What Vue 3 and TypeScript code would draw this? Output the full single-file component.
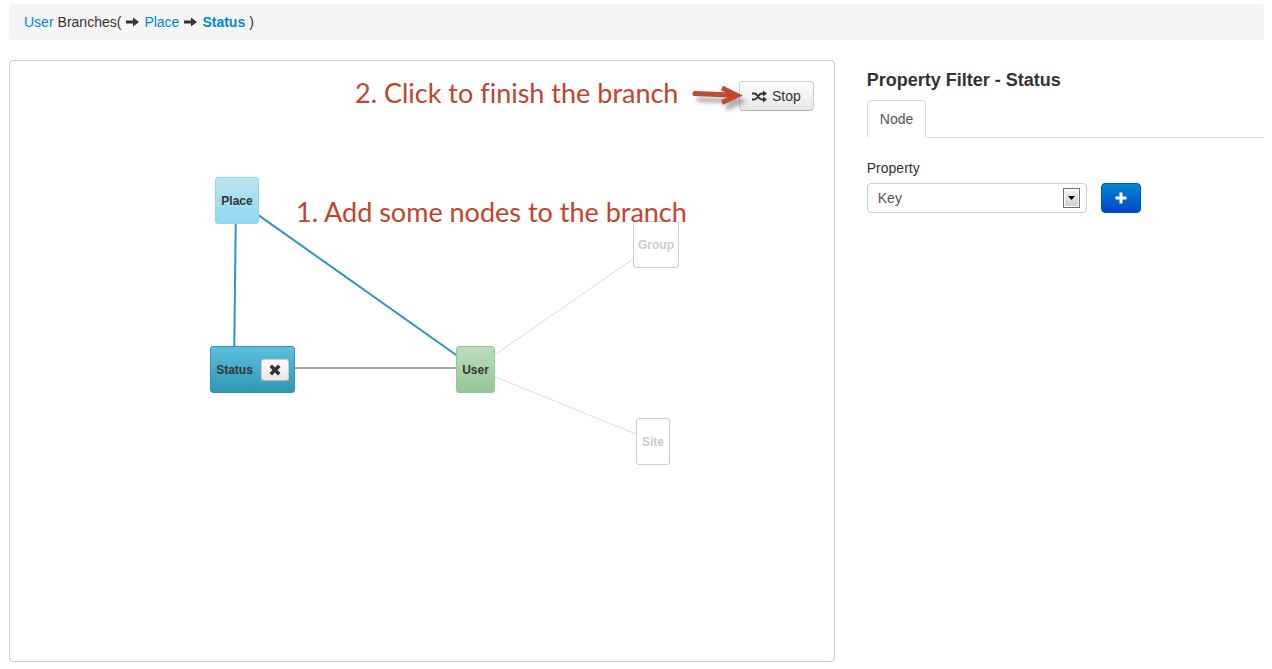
<script setup lang="ts">
import { ref } from 'vue'

interface GraphNode {
  name: string
  kind: 'visited' | 'current' | 'root' | 'idle'
  x: number
  y: number
  width: number
}

const nodes: GraphNode[] = [
  { name: 'Place', kind: 'visited', x: 205, y: 116, width: 44 },
  { name: 'Status', kind: 'current', x: 200, y: 285, width: 85 },
  { name: 'User', kind: 'root', x: 446, y: 285, width: 39 },
  { name: 'Group', kind: 'idle', x: 623, y: 160, width: 46 },
  { name: 'Site', kind: 'idle', x: 626, y: 357, width: 34 },
]

const property = ref('Key')
</script>

<template>
  <div class="page">
    <nav class="breadcrumb" aria-label="Branch">
      <a href="#user">User</a>
      <span>Branches(</span>
      <svg class="arrow" viewBox="0 0 13 10" aria-hidden="true"><path d="M0 3.500h7V.5L13 5 7 9.500v-3H0z" /></svg>
      <a href="#place">Place</a>
      <svg class="arrow" viewBox="0 0 13 10" aria-hidden="true"><path d="M0 3.500h7V.5L13 5 7 9.500v-3H0z" /></svg>
      <a href="#status" class="active">Status</a>
      <span>)</span>
    </nav>

    <div class="row">
      <main class="canvas">
        <svg class="edges" aria-hidden="true">
          <g class="edge-idle">
            <path d="M466 307 646 182" />
            <path d="M466 308 643 380" />
          </g>
          <path class="edge-open" d="M242 307H466" />
          <path class="edge-branch" d="M226 140 224 308M227 139 466 308" />
        </svg>

        <button type="button" class="btn stop">
          <svg width="15" height="13" viewBox="0 0 15 13" aria-hidden="true">
            <path class="stroke" d="M0 3.500h2.200c1.500 0 2.300.8 3.200 2l1.400 2c.9 1.300 1.800 2 3.200 2h2M0 9.500h2.200c1.500 0 2.300-.8 3.200-2l1.400-2c.9-1.300 1.800-2 3.200-2h2" />
            <path d="M11 .5 15 3.500l-4 3zM11 6.500l4 3-4 3z" />
          </svg>
          Stop
        </button>

        <div
          v-for="node in nodes"
          :key="node.name"
          class="node"
          :class="node.kind"
          :style="{ left: node.x + 'px', top: node.y + 'px', width: node.width + 'px' }"
        >
          <span>{{ node.name }}</span>
          <button v-if="node.kind === 'current'" type="button" class="btn remove" aria-label="Remove Status">
            <svg width="12" height="12" viewBox="0 0 12 12" aria-hidden="true">
              <path d="M3 .5 6 3.500 9 .5 11.500 3 8.500 6l3 3L9 11.500l-3-3-3 3L.5 9l3-3-3-3z" />
            </svg>
          </button>
        </div>

        <p class="note note-finish">2. Click to finish the branch</p>
        <p class="note note-add">1. Add some nodes to the branch</p>
        <svg class="pointer" width="66" height="40" viewBox="0 0 66 40" aria-hidden="true">
          <g class="shadow" transform="translate(4 6)">
            <path stroke-linecap="round" d="M8 13.500 44 15" />
            <path d="M35 8 50 15.500 35 22.500" />
          </g>
          <path stroke-linecap="round" d="M8 13.500 44 15" />
          <path d="M35 8 50 15.500 35 22.500" />
        </svg>
      </main>

      <aside class="filter">
        <h1>Property Filter - Status</h1>
        <div class="tabs" role="tablist">
          <button type="button" class="tab" role="tab" aria-selected="true">Node</button>
        </div>
        <label for="property">Property</label>
        <div class="controls">
          <div class="select">
            <select id="property" v-model="property">
              <option>Key</option>
            </select>
            <svg class="drop" width="17" height="20" viewBox="0 0 17 20" aria-hidden="true">
              <defs>
                <linearGradient id="drop-fill" x2="0" y2="1">
                  <stop offset="0" stop-color="#f4f4f4" />
                  <stop offset="1" stop-color="#cfcfcf" />
                </linearGradient>
              </defs>
              <rect x=".5" y=".5" width="16" height="19" fill="#fff" stroke="#707070" />
              <rect x="2" y="2" width="13" height="16" fill="url(#drop-fill)" />
              <path d="M5 8h7l-3.500 4z" />
            </svg>
          </div>
          <button type="button" class="add" aria-label="Add property">
            <svg width="12" height="12" viewBox="0 0 12 12" aria-hidden="true"><path d="M4.500 .5h3v4h4v3h-4v4h-3v-4h-4v-3h4z" /></svg>
          </button>
        </div>
      </aside>
    </div>
  </div>
</template>

<style>
body {
  margin: 0;
  background: #fff;
}
</style>

<style scoped>
* {
  box-sizing: border-box;
}

.page {
  display: flex;
  flex-direction: column;
  gap: 20px;
  min-height: 100vh;
  padding: 4px 8px 7px 9px;
  color: #333;
  font: 14px/20px "Liberation Sans", Arial, sans-serif;
}

button,
select {
  font: inherit;
  color: inherit;
}

.breadcrumb {
  display: flex;
  align-items: center;
  gap: 4px;
  padding: 8px 15px;
  border-radius: 4px;
  background: #f5f5f5;
}

.breadcrumb a {
  color: #08c;
  text-decoration: none;
}

.breadcrumb .active {
  font-weight: bold;
}

.arrow {
  width: 13px;
  height: 10px;
  margin: 0 1px;
  fill: #333;
}

.row {
  display: flex;
  flex: 1;
  gap: 32px;
}

.canvas {
  position: relative;
  display: flex;
  flex: 0 0 auto;
  align-items: flex-start;
  justify-content: flex-end;
  width: 65.8%;
  padding: 20px;
  border: 1px solid #ccc;
  border-radius: 4px;
}

.edges {
  position: absolute;
  inset: 0;
  width: 100%;
  height: 100%;
  fill: none;
}

.edge-idle {
  stroke: #ddd;
}

.edge-open {
  stroke: #aaa;
  stroke-width: 2;
}

.edge-branch {
  stroke: #2f96b4;
  stroke-width: 2;
}

.btn {
  display: flex;
  align-items: center;
  justify-content: center;
  border: 1px solid #ccc;
  border-bottom-color: #b3b3b3;
  border-radius: 4px;
  background: linear-gradient(#fff, #e6e6e6);
  fill: #333;
}

.stop {
  position: relative;
  gap: 5px;
  height: 30px;
  padding: 4px 12px;
}

.stroke {
  fill: none;
  stroke: #333;
  stroke-width: 2;
}

.node {
  position: absolute;
  display: flex;
  align-items: center;
  justify-content: center;
  gap: 8px;
  height: 47px;
  border: 1px solid #ccc;
  border-radius: 3px;
  background: #fff;
  font-size: 12px;
  font-weight: bold;
}

.visited {
  border-color: #8fd8ee;
  background: linear-gradient(#bce3ef, #8fdaf1);
}

.current {
  border-color: #2f96b4;
  background: linear-gradient(#5bc0de, #2f96b4);
}

.root {
  border-color: #93c796;
  background: linear-gradient(#bedcbe, #93c796);
}

.idle {
  color: #ccc;
}

.remove {
  width: 28px;
  height: 22px;
  padding: 0;
  border-radius: 3px;
}

.note {
  position: absolute;
  margin: 0;
  color: #c0452f;
  font: 27px/32px Lato, sans-serif;
  font-variant-ligatures: none;
  white-space: nowrap;
}

.note-finish {
  top: 16px;
  left: 345px;
}

.note-add {
  top: 135px;
  left: 286px;
}

.pointer {
  position: absolute;
  top: 19px;
  left: 677px;
  fill: none;
  stroke: #c24a31;
  stroke-width: 5;
  pointer-events: none;
}

.shadow {
  stroke: #777;
  opacity: 0.6;
  filter: blur(2px);
}

.filter {
  flex: 1;
  min-width: 0;
}

h1 {
  margin: 10px 0;
  font-size: 18px;
  line-height: 20px;
}

.tabs {
  display: flex;
  margin-bottom: 20px;
  border-bottom: 1px solid #ddd;
}

.tab {
  height: 38px;
  margin-bottom: -1px;
  padding: 8px 12px;
  border: 1px solid #ddd;
  border-bottom-color: #fff;
  border-radius: 4px 4px 0 0;
  background: #fff;
  color: #555;
}

label {
  display: block;
  margin-bottom: 5px;
}

.controls {
  display: flex;
  gap: 14px;
}

.select {
  position: relative;
  width: 220px;
}

select {
  width: 100%;
  height: 30px;
  padding: 4px 10px;
  border: 1px solid #ccc;
  border-radius: 4px;
  background: #fff;
  color: #555;
  appearance: none;
}

.drop {
  position: absolute;
  top: 5px;
  right: 7px;
  pointer-events: none;
}

.add {
  display: flex;
  align-items: center;
  justify-content: center;
  width: 40px;
  height: 30px;
  padding: 0;
  border: 1px solid #0055b8;
  border-radius: 4px;
  background: linear-gradient(#08c, #04c);
  fill: #fff;
}
</style>
